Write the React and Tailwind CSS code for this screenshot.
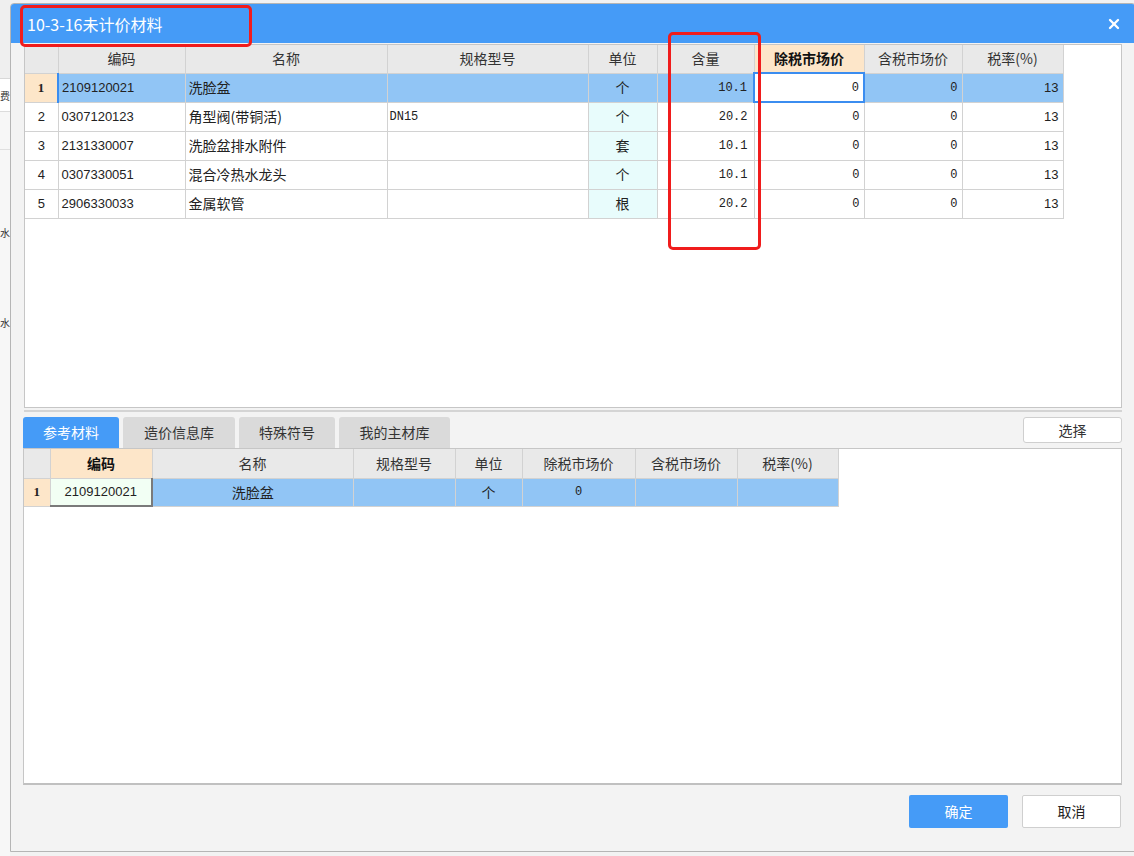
import React from 'react';
import { X } from 'lucide-react';

const cjk = { fontFamily: '"Noto Sans CJK SC", "Noto Sans", sans-serif' };
const num = { fontFamily: '"Liberation Mono", "DejaVu Sans Mono", monospace' };
const lat = { fontFamily: '"Liberation Sans", Arial, sans-serif' };

const topCols = [33, 127, 202, 201, 69, 97, 110, 98, 101];
const topHead = ['', '编码', '名称', '规格型号', '单位', '含量', '除税市场价', '含税市场价', '税率(%)'];
const topRows = [
  ['2109120021', '洗脸盆', '', '个', '10.1'],
  ['0307120123', '角型阀(带铜活)', 'DN15', '个', '20.2'],
  ['2131330007', '洗脸盆排水附件', '', '套', '10.1'],
  ['0307330051', '混合冷热水龙头', '', '个', '10.1'],
  ['2906330033', '金属软管', '', '根', '20.2'],
];

const botCols = [26, 102, 201, 102, 67, 113, 102, 101];
const botHead = ['', '编码', '名称', '规格型号', '单位', '除税市场价', '含税市场价', '税率(%)'];

function TopGrid() {
  return (
    <table className="table-fixed border-collapse text-[14px] text-[#222]" style={{ width: 1038 }}>
      <colgroup>
        {topCols.map((w, i) => (
          <col key={i} style={{ width: w }} />
        ))}
      </colgroup>
      <thead>
        <tr className="h-[28px]">
          {topHead.map((h, i) => (
            <th
              key={i}
              className={
                'border border-[#d2d2d2] border-t-0 text-center ' +
                (i === 6 ? 'bg-[#fde6c9] font-bold text-[#111]' : 'bg-[#e9e9e9] font-normal text-[#333]') +
                (i === 0 ? ' border-l-0' : '')
              }
              style={cjk}
            >
              {h}
            </th>
          ))}
        </tr>
      </thead>
      <tbody>
        {topRows.map((r, idx) => {
          const sel = idx === 0;
          const rowBg = sel ? 'bg-[#91c5f5]' : 'bg-white';
          return (
            <tr key={idx} className="h-[29px]">
              <td
                className={
                  'border border-[#d2d2d2] border-l-0 text-center text-[13px] ' +
                  (sel ? 'bg-[#fde6c9] font-bold' : 'bg-white')
                }
                style={{ fontFamily: sel ? '"Liberation Serif", serif' : '"Liberation Sans", sans-serif' }}
              >
                {idx + 1}
              </td>
              <td
                className={'border border-[#d2d2d2] pl-[3px] text-[13px] ' + rowBg + (sel ? ' border-l-2 border-l-[#3b8df0]' : '')}
                style={lat}
              >
                {r[0]}
              </td>
              <td className={'border border-[#d2d2d2] pl-[3px] ' + rowBg} style={cjk}>
                {r[1]}
              </td>
              <td className={'border border-[#d2d2d2] pl-[2px] text-[12px] ' + rowBg} style={num}>
                {r[2]}
              </td>
              <td
                className={'border border-[#d2d2d2] text-center ' + (sel ? 'bg-[#91c5f5]' : 'bg-[#e8fcfc]')}
                style={cjk}
              >
                {r[3]}
              </td>
              <td className={'border border-[#d2d2d2] text-right pr-[6px] text-[12px] ' + rowBg} style={num}>
                {r[4]}
              </td>
              <td
                className={
                  'text-right pr-[4px] text-[12px] ' +
                  (sel ? 'bg-white border-2 border-[#3b8df0]' : 'bg-white border border-[#d2d2d2]')
                }
                style={num}
              >
                0
              </td>
              <td className={'border border-[#d2d2d2] text-right pr-[4px] text-[12px] ' + rowBg} style={num}>
                0
              </td>
              <td className={'border border-[#d2d2d2] text-right pr-[4px] text-[13px] ' + rowBg} style={lat}>
                13
              </td>
            </tr>
          );
        })}
      </tbody>
    </table>
  );
}

function BottomGrid() {
  return (
    <table className="table-fixed border-collapse text-[14px] text-[#222]" style={{ width: 814 }}>
      <colgroup>
        {botCols.map((w, i) => (
          <col key={i} style={{ width: w }} />
        ))}
      </colgroup>
      <thead>
        <tr className="h-[29px]">
          {botHead.map((h, i) => (
            <th
              key={i}
              className={
                'border border-[#d2d2d2] border-t-0 text-center ' +
                (i === 1 ? 'bg-[#fde6c9] font-bold text-[#111]' : 'bg-[#e9e9e9] font-normal text-[#333]') +
                (i === 0 ? ' border-l-0' : '')
              }
              style={cjk}
            >
              {h}
            </th>
          ))}
        </tr>
      </thead>
      <tbody>
        <tr className="h-[28px]">
          <td
            className="border border-[#d2d2d2] border-l-0 bg-[#fde6c9] text-center font-bold text-[13px]"
            style={{ fontFamily: '"Liberation Serif", serif' }}
          >
            1
          </td>
          <td
            className="bg-[#f2fff4] text-center text-[13px] border border-[#7a7a7a] border-r-2 border-b-2 border-t-[#3b8df0] border-l-[#3b8df0]"
            style={lat}
          >
            2109120021
          </td>
          <td className="border border-[#d2d2d2] bg-[#91c5f5] text-center" style={cjk}>
            洗脸盆
          </td>
          <td className="border border-[#d2d2d2] bg-[#91c5f5]" />
          <td className="border border-[#d2d2d2] bg-[#91c5f5] text-center" style={cjk}>
            个
          </td>
          <td className="border border-[#d2d2d2] bg-[#91c5f5] text-center text-[12px]" style={num}>
            0
          </td>
          <td className="border border-[#d2d2d2] bg-[#91c5f5]" />
          <td className="border border-[#d2d2d2] bg-[#91c5f5]" />
        </tr>
      </tbody>
    </table>
  );
}

const tabs = [
  { label: '参考材料', w: 96, active: true },
  { label: '造价信息库', w: 112 },
  { label: '特殊符号', w: 96 },
  { label: '我的主材库', w: 111 },
];

export default function App() {
  return (
    <div className="relative w-[1134px] h-[856px] overflow-hidden bg-[#f2f2f2]" style={cjk}>
      {/* app behind the dialog */}
      <div className="flex flex-col w-[10px] h-full text-[10px] text-[#333] overflow-hidden">
        <div className="h-[79px] bg-[#efefef] border-b border-[#d8d8d8]" />
        <div className="h-[33px] bg-white border-b border-[#dcdcdc] flex items-center">
          <span>费</span>
        </div>
        <div className="h-[38px] bg-[#f7f7f7] border-b border-[#e0e0e0]" />
        <div className="h-[90px] bg-[#f7f7f7] flex items-end">
          <span>水</span>
        </div>
        <div className="h-[90px] bg-[#f7f7f7] flex items-end">
          <span>水</span>
        </div>
        <div className="flex-1 bg-[#f7f7f7]" />
      </div>

      {/* dialog window */}
      <div className="absolute left-[10px] top-[3px] w-[1126px] h-[849px] flex flex-col bg-[#f3f3f3] border border-[#b5b5b5] rounded-t-[4px]">
        <div className="h-[39px] shrink-0 bg-[#459bf7] rounded-t-[3px] flex items-center justify-between pl-[16px] pr-[13px]">
          <span className="text-white text-[16px]">10-3-16未计价材料</span>
          <X size={16} strokeWidth={3.5} className="text-white" />
        </div>

        <div className="flex flex-col flex-1 pl-[13px] pr-[13px]">
          <div className="mt-[1px] h-[364px] bg-white border border-[#c6c6c6] overflow-hidden">
            <TopGrid />
          </div>
          <div className="h-[3px] mt-[1px] border-b-2 border-[#d4d4d4]" />

          <div className="flex items-start justify-between mt-[5px] h-[31px] -ml-[1px]">
            <div className="flex gap-[4px]">
              {tabs.map((t) => (
                <div
                  key={t.label}
                  className={
                    'h-[31px] rounded-t-[3px] flex items-center justify-center text-[14px] ' +
                    (t.active ? 'bg-[#459bf7] text-white' : 'bg-[#dadada] text-[#333]')
                  }
                  style={{ width: t.w }}
                >
                  {t.label}
                </div>
              ))}
            </div>
            <button className="w-[99px] h-[26px] bg-white border border-[#cfcfcf] rounded-[3px] text-[14px] text-[#333]">
              选择
            </button>
          </div>

          <div className="h-[337px] bg-white border border-[#c6c6c6] border-b-2 border-b-[#c0c0c0] overflow-hidden -ml-[1px]">
            <BottomGrid />
          </div>

          <div className="flex justify-end gap-[14px] mt-[10px] pr-[1px]">
            <button className="w-[99px] h-[33px] bg-[#459bf7] rounded-[2px] text-white text-[14px]">确定</button>
            <button className="w-[99px] h-[33px] bg-white border border-[#cfcfcf] rounded-[2px] text-[#222] text-[14px]">
              取消
            </button>
          </div>
          <div className="flex-1" />
        </div>
      </div>

      {/* red annotation boxes */}
      <div className="absolute left-[20px] top-[5px] w-[232px] h-[42px] border-[3px] border-[#f01c1c] rounded-[5px]" />
      <div className="absolute left-[668px] top-[32px] w-[93px] h-[218px] border-[3px] border-[#f01c1c] rounded-[5px]" />
    </div>
  );
}
